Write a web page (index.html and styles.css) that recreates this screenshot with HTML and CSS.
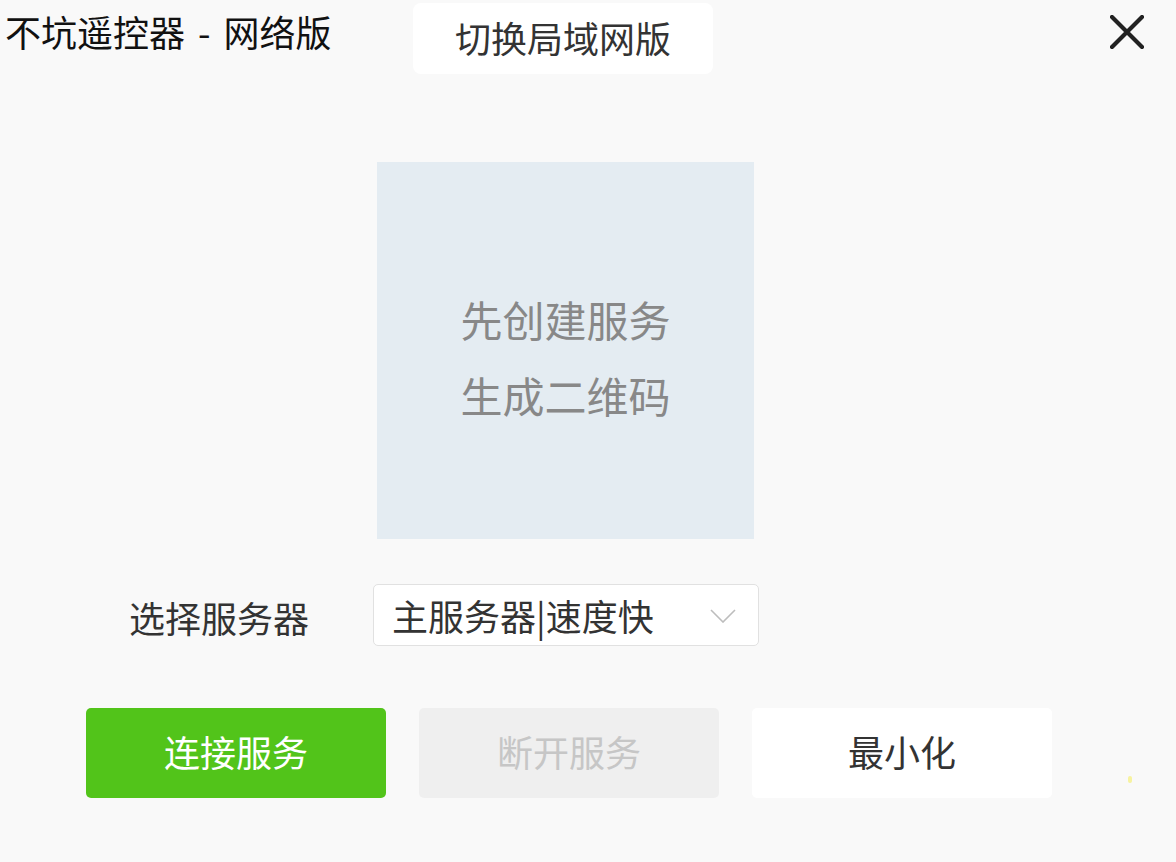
FILE: index.html
```html
<!DOCTYPE html>
<html lang="zh-CN">
<head>
  <meta charset="UTF-8">
  <title>不坑遥控器 - 网络版</title>
  <link rel="stylesheet" href="styles.css">
</head>
<body>
  <div class="app">
    <div class="topbar">
      <div class="title">不坑遥控器 - 网络版</div>
      <button class="switch-btn">切换局域网版</button>
      <button class="close-btn" aria-label="关闭">
        <svg width="34" height="34" viewBox="0 0 34 34">
          <path d="M2 2 L32 32 M32 2 L2 32" stroke="#222" stroke-width="4.2" stroke-linecap="round" fill="none"/>
        </svg>
      </button>
    </div>

    <div class="qr-box">
      <div>先创建服务</div>
      <div>生成二维码</div>
    </div>

    <div class="server-row">
      <div class="server-label">选择服务器</div>
      <div class="select">
        <span class="select-value">主服务器|速度快</span>
        <svg class="chevron" width="26" height="14" viewBox="0 0 26 14">
          <path d="M1 1 L13 13 L25 1" stroke="#bdbdbd" stroke-width="1.6" fill="none"/>
        </svg>
      </div>
    </div>

    <div class="actions">
      <button class="btn btn-primary">连接服务</button>
      <button class="btn btn-disabled" disabled>断开服务</button>
      <button class="btn btn-plain">最小化</button>
      <span class="spark"></span>
    </div>
  </div>
</body>
</html>
```

FILE: styles.css
```css
:root {--bg: #f9f9f9;--text: #333333;--green: #52c41a;--qr-bg: #e4ecf2;--radius: 6px;}
* { box-sizing: border-box; }
html, body {margin: 0;padding: 0;}
body {background: var(--bg);color: var(--text);font-family: "Noto Sans CJK SC", "Noto Sans", sans-serif;width: 1176px;height: 862px;overflow: hidden;}
button {font-family: inherit;border: none;cursor: pointer;}
.app {position: relative;height: 100%;}
.topbar {display: flex;align-items: flex-start;height: 162px;}
.title {width: 413px;padding: 9px 0 0 5px;font-size: 36px;line-height: 44px;color: #111;word-spacing: 5px;}
.switch-btn {margin-top: 3px;width: 300px;height: 71px;background: #fff;border-radius: 8px;font-size: 36px;color: var(--text);padding: 0 0 3px;}
.close-btn {margin: 15px 32px 0 auto;background: none;padding: 0;width: 34px;height: 34px;display: flex;}
.qr-box {margin-left: 377px;width: 377px;height: 377px;background: var(--qr-bg);display: flex;flex-direction: column;justify-content: center;align-items: center;gap: 16px;color: #888;font-size: 42px;line-height: 60px;padding-top: 13px;}
.server-row {display: flex;align-items: center;margin-top: 45px;height: 62px;}
.server-label {width: 373px;padding: 4px 0 0 129px;font-size: 36px;color: var(--text);}
.select {width: 386px;height: 62px;background: #fff;border: 1px solid #e1e1e1;border-radius: 5px;display: flex;align-items: center;padding: 0 22px 0 18px;}
.select-value {flex: 1;font-size: 36px;color: var(--text);line-height: 1;}
.chevron {margin-top: 2px;}
.actions {display: flex;gap: 33px;margin: 62px 0 0 86px;position: relative;}
.btn {width: 300px;height: 90px;border-radius: 5px;font-size: 36px;padding: 0 0 4px;}
.btn-primary {background: var(--green);color: #fff;}
.btn-disabled {background: #efefef;color: #c6c6c6;cursor: not-allowed;}
.btn-plain {background: #fff;color: var(--text);}
.spark {position: absolute;left: 1042px;top: 68px;width: 4px;height: 7px;border-radius: 2px;background: #f7f3a0;}
```
